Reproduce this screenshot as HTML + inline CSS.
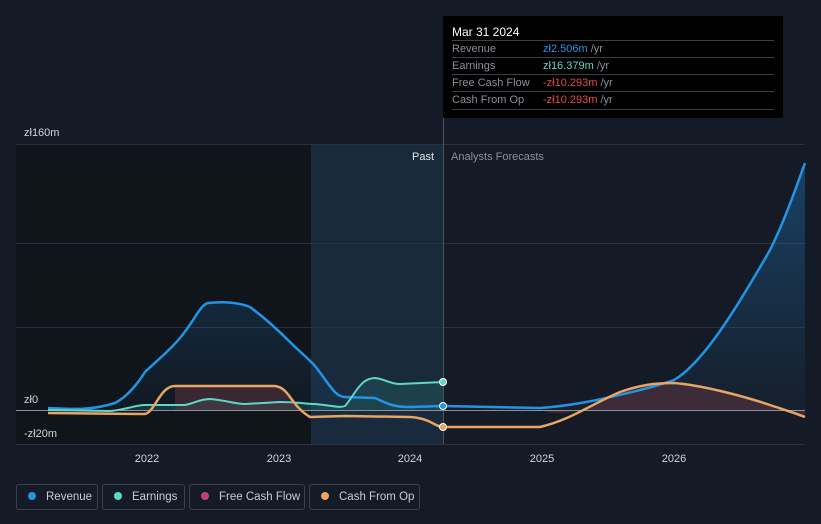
<!DOCTYPE html>
<html><head><style>
body{margin:0;background:#151b26;font-family:"Liberation Sans",sans-serif;}
.tt{position:absolute;left:443px;top:16px;width:340px;height:102px;background:#000;border-radius:2px;font-size:11px;color:#8a8f98}
.tt .h{color:#fff;font-size:12px;padding:9px 0 0 9px;height:18px}
.row{position:absolute;left:9px;width:322px;border-top:1px solid #3a3e46;height:17px;line-height:17px}
.row span{position:absolute;left:91px}
.leg{position:absolute;top:484px;height:26px;border:1px solid #3c424d;border-radius:3px;color:#c8ccd2;font-size:11.5px;line-height:24px;box-sizing:border-box;white-space:nowrap}
.leg i{display:inline-block;width:8px;height:8px;border-radius:50%;margin:0 10px 0 11px;vertical-align:0}
</style></head><body>
<svg width="821" height="524" style="position:absolute;left:0;top:0">
<defs>
<linearGradient id="rg" x1="0" y1="0" x2="0" y2="1"><stop offset="0" stop-color="#1e6fb0" stop-opacity=".45"/><stop offset="1" stop-color="#1e6fb0" stop-opacity=".05"/></linearGradient>
</defs>
<rect x="16" y="144" width="295" height="300" fill="#10141b"/>
<rect x="311" y="144" width="132" height="300" fill="#182a3c"/>
<g stroke="#2b313c" stroke-width="1">
<line x1="16" y1="144.5" x2="805" y2="144.5"/><line x1="16" y1="243.5" x2="805" y2="243.5"/><line x1="16" y1="327.5" x2="805" y2="327.5"/><line x1="16" y1="444.5" x2="805" y2="444.5"/>
</g>
<line x1="443.5" y1="118" x2="443.5" y2="444" stroke="#4a5260"/>
<path d="M48,408 C70,409 90,411 115,403 C130,395 140,380 145,372 C160,358 170,350 180,338 C195,320 200,305 208,303 C225,301 240,303 250,307 C265,318 280,332 290,342 C300,352 310,360 315,366 C330,385 335,397 345,397 L375,398 C390,405 395,407 410,407 L443,406 L540,408 C570,406 600,400 640,390 C660,385 665,383 674,380 C700,365 730,320 770,250 C785,220 795,190 805,163 L805,410 L48,410Z" fill="url(#rg)"/>
<path d="M48,410 L110,411 C125,410 135,405 145,405 L185,405 C195,403 200,399 210,399 C225,400 235,404 245,404 L280,402 C300,402 305,404 315,404 C335,406 340,408 345,406 C355,395 360,378 375,378 C385,379 390,384 400,384 L443,382 L443,410 L48,410Z" fill="#2a6b6a" fill-opacity=".35"/>
<path d="M175,386 L275,386 C285,388 290,400 300,410 L175,410Z M540,410 C570,420 590,405 620,392 C640,385 655,383 674,383 C700,385 740,395 770,405 C785,410 795,413 805,417 L805,410Z" fill="#6a3a45" fill-opacity=".45"/>
<line x1="16" y1="410.5" x2="805" y2="410.5" stroke="#8a8f98"/>
<path d="M48,408 C70,409 90,411 115,403 C130,395 140,380 145,372 C160,358 170,350 180,338 C195,320 200,305 208,303 C225,301 240,303 250,307 C265,318 280,332 290,342 C300,352 310,360 315,366 C330,385 335,397 345,397 L375,398 C390,405 395,407 410,407 L443,406 L540,408 C570,406 600,400 640,390 C660,385 665,383 674,380 C700,365 730,320 770,250 C785,220 795,190 805,163" fill="none" stroke="#2394e4" stroke-width="2.5"/>
<path d="M48,410 L110,411 C125,410 135,405 145,405 L185,405 C195,403 200,399 210,399 C225,400 235,404 245,404 L280,402 C300,402 305,404 315,404 C335,406 340,408 345,406 C355,395 360,378 375,378 C385,379 390,384 400,384 L443,382" fill="none" stroke="#5fd7c8" stroke-width="2"/>
<path d="M48,413 L145,414 C155,412 160,386 175,386 L275,386 C290,388 290,405 310,417 L345,416 L410,417 C430,418 435,427 443,427 L540,427 C570,420 590,405 620,392 C640,385 655,383 674,383 C700,385 740,395 770,405 C785,410 795,413 805,417" fill="none" stroke="#e8a563" stroke-width="2.5"/>
<circle cx="443" cy="382" r="3.5" fill="#5fd7c8" stroke="#fff" stroke-width="1"/>
<circle cx="443" cy="406" r="3.5" fill="#2394e4" stroke="#fff" stroke-width="1"/>
<circle cx="443" cy="427" r="3.5" fill="#e8a563" stroke="#fff" stroke-width="1"/>
<g font-size="11" fill="#d0d4da">
<text x="24" y="136">zł160m</text><text x="24" y="403">zł0</text><text x="24" y="437">-zł20m</text>
<text x="412" y="160" fill="#e0e3e8">Past</text><text x="451" y="160" fill="#8a8f98">Analysts Forecasts</text>
<g text-anchor="middle"><text x="147" y="462">2022</text><text x="279" y="462">2023</text><text x="410" y="462">2024</text><text x="542" y="462">2025</text><text x="674" y="462">2026</text></g>
</g>
</svg>
<div class="tt"><div class="h">Mar 31 2024</div>
<div class="row" style="top:24px">Revenue<span style="color:#2394e4">zł2.506m <b style="font-weight:normal;color:#8a8f98">/yr</b></span></div>
<div class="row" style="top:41px">Earnings<span style="color:#5fd7c8">zł16.379m <b style="font-weight:normal;color:#8a8f98">/yr</b></span></div>
<div class="row" style="top:58px">Free Cash Flow<span style="color:#e84a4a">-zł10.293m <b style="font-weight:normal;color:#8a8f98">/yr</b></span></div>
<div class="row" style="top:75px">Cash From Op<span style="color:#e84a4a">-zł10.293m <b style="font-weight:normal;color:#8a8f98">/yr</b></span></div>
<div class="row" style="top:93px;height:0"></div>
</div>
<div class="leg" style="left:16px;width:82px"><i style="background:#2394e4"></i>Revenue</div>
<div class="leg" style="left:102px;width:83px"><i style="background:#5fd7c8"></i>Earnings</div>
<div class="leg" style="left:189px;width:116px"><i style="background:#c0407f"></i>Free Cash Flow</div>
<div class="leg" style="left:309px;width:111px"><i style="background:#e8a563"></i>Cash From Op</div>
</body></html>
